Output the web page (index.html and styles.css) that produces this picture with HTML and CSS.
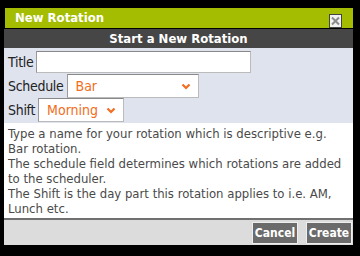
FILE: index.html
```html
<!DOCTYPE html>
<html>
<head>
<meta charset="utf-8">
<link rel="stylesheet" href="styles.css">
</head>
<body>
<div class="dialog">
  <div class="titlebar">
    <span class="title">New Rotation</span>
    <span class="close"><svg width="11" height="12" viewBox="0 0 11 12"><path d="M2 2.5 L9 9.5 M9 2.5 L2 9.5" stroke="#8a8a8a" stroke-width="2"/></svg></span>
  </div>
  <div class="header">Start a New Rotation</div>
  <div class="form">
    <div class="row"><label class="lbl">Title</label><input class="txt" type="text"></div>
    <div class="row"><label class="lbl">Schedule</label><div class="sel sel-sched"><span>Bar</span><svg class="chev" width="10" height="7" viewBox="0 0 10 7"><path d="M1.5 1.5 L5 5 L8.5 1.5" stroke="#f26d21" stroke-width="2.2" fill="none"/></svg></div></div>
    <div class="row"><label class="lbl">Shift</label><div class="sel sel-shift"><span>Morning</span><svg class="chev" width="10" height="7" viewBox="0 0 10 7"><path d="M1.5 1.5 L5 5 L8.5 1.5" stroke="#f26d21" stroke-width="2.2" fill="none"/></svg></div></div>
  </div>
  <div class="help">
    <p>Type a name for your rotation which is descriptive e.g. Bar rotation.</p>
    <p>The schedule field determines which rotations are added to the scheduler.</p>
    <p>The Shift is the day part this rotation applies to i.e. AM, Lunch etc.</p>
  </div>
  <div class="footer">
    <button class="btn">Cancel</button>
    <button class="btn">Create</button>
  </div>
</div>
</body>
</html>
```
FILE: styles.css
```css
html, body {
  margin: 0;
  padding: 0;
  background: #000;
  font-family: Tahoma, "DejaVu Sans Condensed", "DejaVu Sans", sans-serif;
}
.dialog {
  width: 349px;
  margin: 8px 0 0 4px;
}
.titlebar {
  height: 20px;
  margin-left: 1px;
  background: #a4bd00;
  display: flex;
  align-items: center;
  justify-content: space-between;
  padding: 0 11px 0 10px;
  box-sizing: border-box;
}
.title {
  color: #fff;
  font-weight: bold;
  font-size: 13px;
  line-height: 20px;
}
.close {
  width: 11px;
  height: 12px;
  margin-top: 5px;
  background: #f2f2f2;
  border: 1px solid #444;
  display: flex;
}
.header {
  margin-top: 1px;
  height: 19px;
  background: #464646;
  color: #fff;
  font-weight: bold;
  font-size: 13px;
  line-height: 19px;
  text-align: center;
}
.form {
  background: #dee3ee;
  padding: 2px 0 1px 4px;
}
.row {
  display: flex;
  align-items: center;
  height: 24px;
}
.lbl {
  font-size: 14px;
  letter-spacing: -0.3px;
  color: #222;
  margin-right: 3px;
}
.txt {
  width: 215px;
  height: 22px;
  box-sizing: border-box;
  border: 1px solid #bbb;
  border-top-color: #888;
  border-left-color: #999;
  background: #fff;
  padding: 0;
  margin: 0;
}
.sel {
  display: flex;
  align-items: center;
  justify-content: space-between;
  box-sizing: border-box;
  height: 24px;
  background: #fff;
  border: 1px solid #bbb;
  border-top-color: #888;
  border-left-color: #999;
  color: #f26d21;
  font-size: 14px;
  padding: 0 7px 0 8px;
}
.sel-sched { width: 132px; }
.sel-shift { width: 86px; }
.help {
  background: #fff;
  padding: 3px 4px 2px 4px;
  color: #4a4a4a;
  font-size: 13px;
  line-height: 15px;
  border-bottom: 2px solid #707070;
}
.help p { margin: 0; }
.footer {
  background: #dcdcdc;
  height: 25px;
  display: flex;
  justify-content: flex-end;
  align-items: center;
  gap: 8px;
  padding-right: 1px;
}
.btn {
  width: 46px;
  height: 22px;
  background: #6b6b6b;
  color: #fff;
  font-family: inherit;
  font-weight: bold;
  font-size: 12px;
  border: 1px solid #eee;
  padding: 0;
}
```
